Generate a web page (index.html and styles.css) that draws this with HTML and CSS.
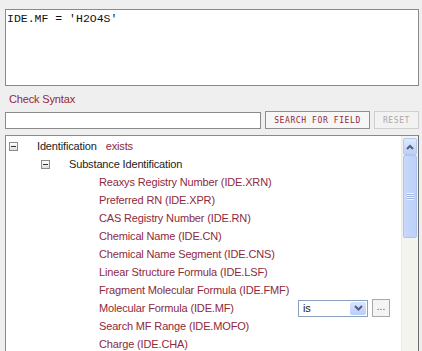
FILE: index.html
```html
<!DOCTYPE html>
<html lang="en">
<head>
  <meta charset="UTF-8">
  <title>Query Builder</title>
  <link rel="stylesheet" href="styles.css">
</head>
<body>
  <div class="page">
    <textarea class="query" readonly>IDE.MF = 'H2O4S'</textarea>
    <a class="check-link" href="#">Check Syntax</a>

    <div class="search-row">
      <input type="text" class="field-search">
      <button type="button" class="btn">Search for field</button>
      <button type="button" class="btn disabled">Reset</button>
    </div>

    <div class="tree">
      <div class="tree-list">
        <div class="node level-0">
          <span class="toggle"></span>
          <span class="label">Identification</span>
          <span class="flag">exists</span>
        </div>
        <div class="node level-1">
          <span class="toggle"></span>
          <span class="label">Substance Identification</span>
        </div>
        <div class="leaf">Reaxys Registry Number (IDE.XRN)</div>
        <div class="leaf">Preferred RN (IDE.XPR)</div>
        <div class="leaf">CAS Registry Number (IDE.RN)</div>
        <div class="leaf">Chemical Name (IDE.CN)</div>
        <div class="leaf">Chemical Name Segment (IDE.CNS)</div>
        <div class="leaf">Linear Structure Formula (IDE.LSF)</div>
        <div class="leaf">Fragment Molecular Formula (IDE.FMF)</div>
        <div class="leaf active">
          <span class="leaf-name">Molecular Formula (IDE.MF)</span>
          <span class="combo">
            <span class="combo-value">is</span>
            <span class="combo-arrow">
              <svg width="9" height="6" viewBox="0 0 9 6"><path d="M1 1l3.5 3.5L8 1" fill="none" stroke="#4d6185" stroke-width="2"/></svg>
            </span>
          </span>
          <button type="button" class="more">...</button>
        </div>
        <div class="leaf">Search MF Range (IDE.MOFO)</div>
        <div class="leaf">Charge (IDE.CHA)</div>
      </div>

      <div class="scrollbar">
        <div class="scroll-btn">
          <svg width="8" height="6" viewBox="0 0 8 6"><path d="M1 5l3-3 3 3" fill="none" stroke="#4d6185" stroke-width="2"/></svg>
        </div>
        <div class="scroll-thumb"><span class="grip"></span></div>
        <div class="scroll-track"></div>
      </div>
    </div>
  </div>
</body>
</html>
```

FILE: styles.css
```css
body {
  margin: 0;
  background-color: #f0efef;
  font-family: 'Liberation Sans', Arial, sans-serif;
  font-size: 11px;
  letter-spacing: -0.15px;
  color: #222;
}
.page {
  padding: 9px 3px 0 5px;
  display: flex;
  flex-direction: column;
}
.query {
  display: block;
  box-sizing: border-box;
  width: 414px;
  height: 77px;
  margin: 0;
  padding: 2px 1px;
  border: 1px solid #8a8a8a;
  background-color: #fff;
  font-family: 'Liberation Mono', 'Courier New', monospace;
  font-size: 11.5px;
  line-height: 13px;
  letter-spacing: 0;
  color: #111;
  resize: none;
  outline: none;
}
.check-link {
  margin: 6px 0 0 4px;
  line-height: 14px;
  color: #8e2a3c;
  text-decoration: none;
}
.search-row {
  display: flex;
  align-items: flex-start;
  gap: 4px;
  margin-top: 5px;
}
.field-search {
  box-sizing: border-box;
  width: 256px;
  height: 17px;
  margin: 1px 0 0;
  padding: 0 2px;
  border: 1px solid #8a8a8a;
  background-color: #fff;
}
.btn {
  box-sizing: border-box;
  height: 18px;
  padding: 0;
  width: 105px;
  border: 1px solid #8f8f8f;
  background-color: #f7f6f6;
  font-family: 'DejaVu Sans Mono', monospace;
  font-size: 8px;
  letter-spacing: 0.6px;
  text-transform: uppercase;
  color: #8e2a3c;
  cursor: pointer;
}
.btn.disabled {
  width: 45px;
  border-color: #cfcfcf;
  background-color: #f2f2f2;
  color: #a9a9a9;
}
.tree {
  display: flex;
  margin-top: 6px;
  height: 240px;
  border: 1px solid #8a8a8a;
  border-right-color: #6d6d6d;
  background-color: #fff;
  overflow: hidden;
}
.tree-list {
  flex: 1;
  padding-top: 1px;
}
.node,
.leaf {
  display: flex;
  align-items: center;
  height: 18px;
}
.level-0 {
  padding-left: 3px;
}
.level-1 {
  padding-left: 35px;
}
.toggle {
  position: relative;
  box-sizing: border-box;
  width: 9px;
  height: 9px;
  margin-right: 19px;
  border: 1px solid #8c8c8c;
  background: linear-gradient(#fff, #dedede);
}
.toggle::after {
  content: "";
  position: absolute;
  left: 1px;
  right: 1px;
  top: 3px;
  height: 1px;
  background-color: #333;
}
.flag {
  margin-left: 9px;
  color: #8e2a3c;
}
.leaf {
  padding-left: 93px;
  color: #8e2a3c;
}
.leaf-name {
  width: 199px;
}
.combo {
  display: flex;
  box-sizing: border-box;
  width: 70px;
  height: 17px;
  border: 1px solid #8aa0bf;
  background-color: #fff;
  color: #222;
}
.combo-value {
  flex: 1;
  padding-left: 4px;
  line-height: 15px;
}
.combo-arrow {
  display: flex;
  align-items: center;
  justify-content: center;
  width: 16px;
  margin: 1px;
  border-radius: 2px;
  background: linear-gradient(#dbe6fd, #b9cdf7);
}
.more {
  box-sizing: border-box;
  width: 18px;
  height: 18px;
  margin-left: 4px;
  padding: 0 0 4px;
  border: 1px solid #a8a8a8;
  background-color: #f4f4f4;
  font-size: 10px;
  color: #555;
}
.scrollbar {
  display: flex;
  flex-direction: column;
  width: 16px;
  background-color: #f4f4ee;
  border-left: 1px solid #ebebe4;
}
.scroll-btn {
  display: flex;
  align-items: center;
  justify-content: center;
  height: 15px;
  margin: 2px 1px 0;
  border: 1px solid #b5c7ef;
  border-radius: 2px;
  background: linear-gradient(#dfe8fd, #bccff8);
}
.scroll-thumb {
  display: flex;
  align-items: center;
  justify-content: center;
  height: 81px;
  margin: 0 1px;
  border: 1px solid #b0c3ed;
  border-radius: 2px;
  background: linear-gradient(90deg, #c9d8fc, #bcd0fa);
}
.grip {
  width: 7px;
  height: 7px;
  background: repeating-linear-gradient(#eef3ff 0 1px, #9fb3e4 1px 2px);
}
.scroll-track {
  flex: 1;
}
```
